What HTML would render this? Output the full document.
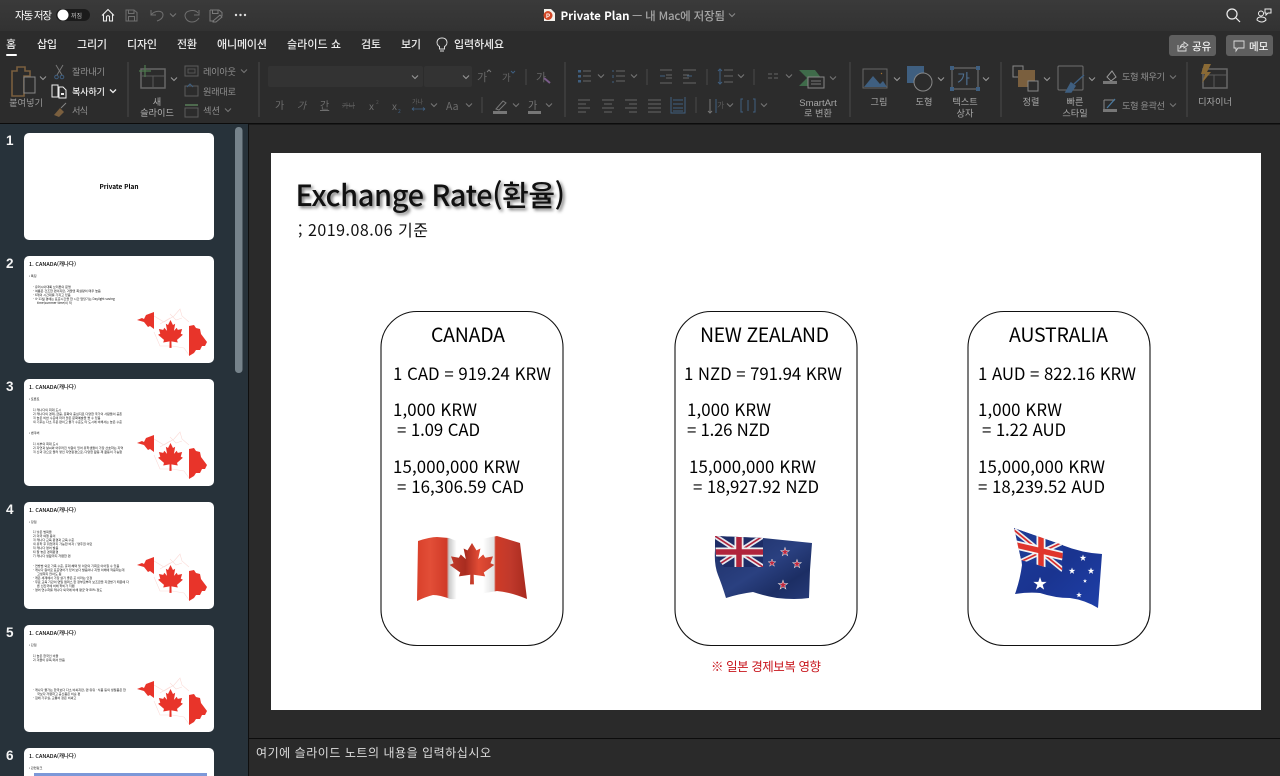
<!DOCTYPE html>
<html lang="ko"><head><meta charset="utf-8"><title>Private Plan</title>
<style>
html,body{margin:0;padding:0;background:#2a2a2a;width:1280px;height:776px;overflow:hidden}
svg{position:absolute;left:0;top:0;display:block;font-family:"Noto Sans CJK KR","Liberation Sans",sans-serif;font-size:9.2px}
.w{fill:#fff}.d{fill:#7c7c7c}
.tab{fill:#ededed;font-size:11px;font-weight:500}
.ch{fill:none;stroke:#9a9a9a;stroke-width:1}
.chd{fill:none;stroke:#777;stroke-width:1}
.blu{fill:none;stroke:#3f5f80;stroke-width:1}
.dg{fill:none;stroke:#666;stroke-width:1}
.s{fill:#000;font-size:16.8px}
.m{fill:#111;font-size:3.1px}
.mt{fill:#000;font-size:5.4px;font-weight:500}
.num{fill:#f4f4f4;font-size:13.500px;font-weight:700;font-family:"Liberation Sans",sans-serif}
</style></head><body>
<svg width="1280" height="776" viewBox="0 0 1280 776" xmlns="http://www.w3.org/2000/svg">
<defs>
<linearGradient id="tb" x1="0" y1="0" x2="0" y2="1"><stop offset="0" stop-color="#3a3a3a"/><stop offset="1" stop-color="#323232"/></linearGradient>
<linearGradient id="ca" x1="0" y1="0" x2="1" y2="0">
<stop offset="0" stop-color="#d9402b"/><stop offset=".12" stop-color="#e24e37"/><stop offset=".27" stop-color="#d03a28"/><stop offset=".29" stop-color="#c8c8c8"/><stop offset=".36" stop-color="#fff"/><stop offset=".6" stop-color="#fff"/><stop offset=".7" stop-color="#e0e0e0"/><stop offset=".715" stop-color="#cf3a27"/><stop offset=".85" stop-color="#c0392b"/><stop offset="1" stop-color="#a82a1f"/></linearGradient>
<linearGradient id="leafg" x1="0" y1="0" x2="1" y2="0"><stop offset="0" stop-color="#c23a2a"/><stop offset=".35" stop-color="#a92c20"/><stop offset=".65" stop-color="#e24c35"/><stop offset="1" stop-color="#c93c2b"/></linearGradient>
<linearGradient id="nzg" x1="0" y1="0" x2="1" y2="1"><stop offset="0" stop-color="#1d2f66"/><stop offset=".5" stop-color="#2a4080"/><stop offset=".75" stop-color="#1c2e64"/><stop offset="1" stop-color="#263a78"/></linearGradient>
<linearGradient id="aug" x1="0" y1="0" x2="1" y2="1"><stop offset="0" stop-color="#1c3a9a"/><stop offset=".5" stop-color="#1a3490"/><stop offset="1" stop-color="#1e3fa8"/></linearGradient>
<clipPath id="nzc"><polygon points="715,536 763,538 763,567 724,567 716,556"/></clipPath>
<clipPath id="auc"><polygon points="1014,528 1063,545 1062,572 1021,560"/></clipPath>
<polygon id="leaf" points="0,-1 .16,-.68 .3,-.76 .22,-.3 .4,-.5 .47,-.36 .75,-.42 .66,-.12 .8,-.05 .42,.28 .47,.45 .06,.38 .07,.8 -.07,.8 -.06,.38 -.47,.45 -.42,.28 -.8,-.05 -.66,-.12 -.75,-.42 -.47,-.36 -.4,-.5 -.22,-.3 -.3,-.76 -.16,-.68"/>
<polygon id="star" points="0,-1 .24,-.31 .95,-.31 .38,.12 .59,.81 0,.4 -.59,.81 -.38,.12 -.95,-.31 -.24,-.31"/>
<path id="chev" d="M-3 -1.500L0 1.500L3 -1.500"/>
<g id="map">
<path d="M130 60L140 66L150 60L156 53L158 60L165 66M130 76L136 90L148 90L160 92L165 99M146 58L152 64L158 62M136 68L146 62" fill="none" stroke="#fbdcd8" stroke-width=".6"/>
<path d="M113 64L118 62L120 63L122 59L130 56V73L126 70L124 71L120 66Z" fill="#e8342a"/>
<path d="M165 70L170 69L172 72L176 73L177 78L183 86L181 90L178 90L176 94L172 94L170 97L165 100Z" fill="#e8342a"/>
<use href="#leaf" transform="translate(146.500 79.500) scale(15.500 15.500)" fill="#e8342a"/>
</g>
</defs>

<!-- backgrounds -->
<rect width="1280" height="776" fill="#2a2a2a"/>
<rect width="1280" height="31" fill="url(#tb)"/>
<rect y="31" width="1280" height="92" fill="#2c2c2c"/>
<rect y="123" width="1280" height="1.500" fill="#0c0c0c"/>
<rect y="124" width="248" height="652" fill="#27323a"/>
<rect x="248" y="124" width="1" height="652" fill="#0f0f0f"/>
<rect x="249" y="738" width="1031" height="1" fill="#0c0c0c"/>

<!-- title bar -->
<text x="15" y="19" class="w" font-size="10.500" textLength="37">자동 저장</text>
<rect x="56" y="9" width="34" height="12" rx="6" fill="#1b1b1b"/>
<circle cx="63" cy="15" r="5.500" fill="#fff"/>
<text x="71" y="18" fill="#c8c8c8" font-size="6">꺼짐</text>
<path d="M102 15.500L108 9.500L114 15.500M103.500 14.500V21H106.500V16.500Q108 14.800 109.500 16.500V21H112.500V14.500" fill="none" stroke="#eee" stroke-width="1.100"/>
<path d="M126 10H134L137 12.500V21H126ZM128.500 10V13.500H134V10M128.500 21V16.500H134.500V21" fill="none" stroke="#6f6f6f" stroke-width="1"/>
<path d="M151 10V15H156M151 15C155 10 163 10 163 15C163 18 160 20 157 21" fill="none" stroke="#6f6f6f" stroke-width="1"/>
<use href="#chev" x="173" y="15" class="chd"/>
<path d="M199 10V15H194M198 13C195 9 186 10 185 15C185 19 188 22 192 22C195 22 197 21 199 18" fill="none" stroke="#6f6f6f" stroke-width="1"/>
<path d="M210 10H219L222 12.500V16M210 10V21H214M212.500 10V13.500H218V10M213 21L220 15L222 17L216 22H213Z" fill="none" stroke="#7a7a7a" stroke-width="1"/>
<circle cx="236" cy="15" r="1.200" fill="#ddd"/><circle cx="240.500" cy="15" r="1.200" fill="#ddd"/><circle cx="245" cy="15" r="1.200" fill="#ddd"/>

<path d="M544 9H551L555 13V21H544Z" fill="#f4f1ec"/>
<circle cx="548" cy="15.500" r="4.500" fill="#d24726"/>
<text x="546" y="18" fill="#fff" font-size="6" font-weight="700" font-family="Liberation Sans">P</text>
<text x="560.500" y="20" class="w" font-size="11.500" font-weight="700" textLength="69">Private Plan</text>
<text x="632" y="20" fill="#a5a5a5" font-size="11.500" font-weight="500" textLength="93">— 내 Mac에 저장됨</text>
<use href="#chev" x="732" y="15" stroke="#8a8a8a" fill="none"/>

<circle cx="1232" cy="14" r="5" fill="none" stroke="#eee" stroke-width="1.200"/><path d="M1236 18L1240 22" stroke="#eee" stroke-width="1.200"/>
<circle cx="1261" cy="13.500" r="2.500" fill="none" stroke="#eee"/><path d="M1257 20Q1257 17 1261 17Q1266 17 1266 20Q1262 24 1257 20Z" fill="none" stroke="#eee"/><path d="M1265 9H1271V13H1268L1266 15V13H1265Z" fill="none" stroke="#eee"/>

<!-- tabs -->
<text x="6" y="48" class="tab">홈</text>
<rect x="6" y="54" width="11" height="2" rx="1" fill="#fff"/>
<text x="37" y="48" class="tab" textLength="20">삽입</text>
<text x="77" y="48" class="tab" textLength="30">그리기</text>
<text x="127" y="48" class="tab" textLength="30">디자인</text>
<text x="177" y="48" class="tab" textLength="20">전환</text>
<text x="217" y="48" class="tab" textLength="50">애니메이션</text>
<text x="287" y="48" class="tab" textLength="54">슬라이드 쇼</text>
<text x="361" y="48" class="tab" textLength="20">검토</text>
<text x="401" y="48" class="tab" textLength="20">보기</text>
<path d="M442 38A4.500 4.500 0 0 0 439.500 46.500V49H444.500V46.500A4.500 4.500 0 0 0 442 38ZM440 51H444" fill="none" stroke="#ddd"/>
<text x="454" y="48" class="tab" textLength="50">입력하세요</text>

<rect x="1169" y="35" width="47" height="21" rx="3" fill="#5f5f5f"/>
<path d="M1178 45V51H1186V48M1180 48Q1181 44 1184 44V42L1188 45L1184 48V46Q1182 46 1180 48Z" fill="none" stroke="#ddd" stroke-width=".9"/>
<text x="1192" y="50" fill="#f0f0f0" font-size="10.500" font-weight="500">공유</text>
<rect x="1226" y="35" width="47" height="21" rx="3" fill="#5f5f5f"/>
<path d="M1234 41H1244V48H1238L1236 51V48H1234Z" fill="none" stroke="#ddd" stroke-width=".9"/>
<text x="1249" y="50" fill="#f0f0f0" font-size="10.500" font-weight="500">메모</text>

<!-- separators -->
<g stroke="#4a4a4a" stroke-width="1">
<path d="M128 62V117M259 62V117M565 62V117M850 62V117M1001 62V117M1187 62V117"/>
<path d="M526 69V85M482 97V113M647 69V85M707 69V85M754 69V85M696 97V113"/></g>

<!-- clipboard -->
<path d="M12 71H17V67H25V71H30V76H24V96H12Z" fill="none" stroke="#7a5f3e" stroke-width="1.600"/>
<rect x="24" y="77" width="11" height="16" fill="#2c2c2c" stroke="#888"/>
<use href="#chev" x="43" y="78" class="ch"/>
<text x="26" y="106" text-anchor="middle" style="fill:#9a9a9a">붙여넣기</text>
<path d="M56 65L62 75M63 65L57 75" stroke="#777" fill="none"/><circle cx="56.500" cy="77" r="1.800" class="blu"/><circle cx="62" cy="77" r="1.800" class="blu"/>
<text x="72" y="75" textLength="33" style="fill:#919191">잘라내기</text>
<path d="M52 85H58V97H52ZM58 85V86M59 87H63L66 90V98H59Z" fill="none" stroke="#eee"/><rect x="61" y="93" width="3" height="2" fill="#eee"/>
<text x="72" y="95" fill="#eee" font-weight="500" textLength="33">복사하기</text>
<use href="#chev" x="113" y="91" stroke="#eee" stroke-width="1.300" fill="none"/>
<path d="M54 115L60 108L64 112L59 117L54 115Z" fill="#7a5f3e"/><path d="M61 108L66 103" stroke="#888"/>
<text x="72" y="114" textLength="16" style="fill:#919191">서식</text>

<!-- slide group -->
<rect x="141" y="69" width="24" height="19" fill="none" stroke="#666" stroke-width="1.500"/>
<path d="M141 76H165M153 76V88" stroke="#5a5a5a" fill="none"/><path d="M145 65V77M139 71H151" stroke="#4e7a4e" stroke-width="1.200" fill="none"/>
<use href="#chev" x="174" y="79" class="ch"/>
<text x="157" y="105" text-anchor="middle" style="fill:#b0b0b0">새</text>
<text x="157" y="116" text-anchor="middle" style="fill:#b0b0b0">슬라이드</text>
<rect x="185" y="66" width="13" height="10" fill="none" stroke="#5c5c5c"/><rect x="188" y="69" width="7" height="4" fill="none" stroke="#555"/>
<text x="203" y="75" textLength="33" style="fill:#8e8e8e">레이아웃</text><use href="#chev" x="244" y="71" class="chd"/>
<rect x="185" y="86" width="13" height="10" fill="none" stroke="#5c5c5c"/><path d="M187 87L190 84L193 87" fill="none" stroke="#3f5f80"/>
<text x="203" y="95" textLength="33" style="fill:#8e8e8e">원래대로</text>
<rect x="185" y="104" width="13" height="2" fill="#4e6a4e"/><rect x="185" y="108" width="13" height="9" fill="none" stroke="#5c5c5c"/>
<text x="203" y="114" textLength="17" style="fill:#8e8e8e">섹션</text><use href="#chev" x="228" y="110" class="chd"/>

<!-- font -->
<rect x="268" y="66" width="155" height="21" rx="2" fill="#333"/>
<rect x="424" y="66" width="48" height="21" rx="2" fill="#333"/>
<use href="#chev" x="415" y="77" class="ch"/><use href="#chev" x="466" y="77" class="ch"/>
<text x="477" y="81" font-size="11" style="fill:#666">가</text><path d="M487 72L489 70L491 72" stroke="#777" fill="none"/>
<text x="502" y="81" font-size="9.500" style="fill:#666">가</text><path d="M511 71L513 73L515 71" stroke="#3f5f80" fill="none"/>
<text x="536" y="81" font-size="11" style="fill:#666">가</text><path d="M544 78L550 83" stroke="#7a5c8a" stroke-width="2"/>
<text x="275" y="109" font-size="10" style="fill:#6e6e6e">가</text>
<text x="297" y="109" font-size="10" font-style="italic" style="fill:#666">가</text>
<text x="320" y="109" font-size="10" text-decoration="underline" style="fill:#6e6e6e">간</text>
<text x="342" y="108" font-size="7" style="fill:#5c5c5c" text-decoration="line-through">가나</text>
<text x="369" y="110" font-size="10" style="fill:#6e6e6e">x</text><text x="376" y="104" font-size="5" style="fill:#555">2</text>
<text x="392" y="110" font-size="10" style="fill:#6e6e6e">x</text><text x="398" y="113" font-size="5" style="fill:#3f5f80">2</text>
<text x="412" y="104" font-size="6" style="fill:#666">가나</text><path d="M412 109H425M412 109L414 107.500M412 109L414 110.500M425 109L423 107.500M425 109L423 110.500" stroke="#3f5f80" fill="none" stroke-width=".8"/>
<text x="446" y="110" font-size="10.500" style="fill:#6e6e6e">Aa</text>
<use href="#chev" x="434" y="105" class="chd"/><use href="#chev" x="469" y="105" class="chd"/>
<path d="M496 109L503 101L506 103L499 110Z" fill="none" stroke="#777"/><rect x="493" y="111" width="14" height="3" fill="#777"/><use href="#chev" x="516" y="105" class="chd"/>
<text x="528" y="109" font-size="10" style="fill:#777">가</text><rect x="528" y="111" width="13" height="3" fill="#777"/><use href="#chev" x="549" y="105" class="chd"/>

<!-- paragraph -->
<g class="dg">
<path d="M583 71H591M583 76H591M583 81H591M616 71H625M616 76H625M616 81H625M660 70H672M666 75H672M666 78H672M660 83H672M683 70H696M683 83H696M683 75H689M683 78H689M724 70H733M724 76H733M724 82H733M768 74H772M768 78H772M774 74H778M774 78H778"/>
<path d="M578 100H590M578 104H586M578 108H590M578 112H586M602 100H614M604 104H612M602 108H614M604 112H612M625 100H637M629 104H637M625 108H637M629 112H637M648 100H661M648 104H661M648 108H661M648 112H661"/></g>
<rect x="578" y="70" width="3" height="2.500" fill="#3f5f80"/><rect x="578" y="75" width="3" height="2.500" fill="#3f5f80"/><rect x="578" y="80" width="3" height="2.500" fill="#3f5f80"/>
<use href="#chev" x="601" y="76" class="chd"/><use href="#chev" x="634" y="76" class="chd"/>
<path d="M613 70V72M613 75V78M613 81V83" stroke="#3f5f80"/>
<path d="M660 76H665M687 76H692M720 69V84M718 71L720 69L722 71M718 82L720 84L722 82" class="blu"/>
<use href="#chev" x="741" y="76" class="chd"/>
<use href="#chev" x="789" y="76" class="chd"/><use href="#chev" x="833" y="78" class="chd"/>
<path d="M671 97V113H685V97M673 100H683M673 104H683M673 108H683M673 111H683" class="blu"/>
<path d="M710 99V113M708 111L710 113L712 111" stroke="#777" fill="none"/><path d="M716 99V113" stroke="#3f5f80"/>
<text x="717" y="108" font-size="8" style="fill:#5a5a5a">가</text>
<use href="#chev" x="730" y="105" class="chd"/>
<path d="M743 99H741V112H743M753 99H755V112H753M748 100V111" class="blu"/><use href="#chev" x="764" y="105" class="chd"/>
<path d="M799 70H815L822 79L815 86H799L807 78Z" fill="#3f6b4a"/><rect x="808" y="77" width="16" height="11" fill="#2c2c2c" stroke="#888"/><path d="M811 81H821M811 84H821" stroke="#777"/>
<text x="818" y="106" text-anchor="middle" style="fill:#a6a6a6" font-size="9.500" font-family="Liberation Sans">SmartArt</text>
<text x="818" y="116.500" text-anchor="middle" style="fill:#a6a6a6">로 변환</text>

<!-- insert -->
<rect x="863" y="69" width="24" height="19" fill="#2c2c2c" stroke="#666"/><path d="M864 87L873 76L880 84L883 81L887 87Z" fill="#3f5f80"/><path d="M881 73L882 74" stroke="#b07a30"/>
<use href="#chev" x="897" y="79" class="ch"/>
<text x="879" y="105" text-anchor="middle" style="fill:#a8a8a8">그림</text>
<rect x="907" y="66" width="17" height="17" fill="#3f5f80"/><circle cx="923" cy="82" r="9" fill="#2c2c2c" stroke="#888"/>
<use href="#chev" x="941" y="79" class="ch"/>
<text x="924" y="105" text-anchor="middle" style="fill:#a8a8a8">도형</text>
<rect x="952" y="68" width="26" height="21" fill="none" stroke="#777"/>
<g fill="#3f5f80"><rect x="950" y="66" width="4" height="4"/><rect x="976" y="66" width="4" height="4"/><rect x="950" y="87" width="4" height="4"/><rect x="976" y="87" width="4" height="4"/></g>
<text x="957" y="84" style="fill:#4f6f90" font-size="14">가</text>
<use href="#chev" x="986" y="79" class="ch"/>
<text x="965" y="105" text-anchor="middle" style="fill:#a8a8a8">텍스트</text>
<text x="965" y="116.500" text-anchor="middle" style="fill:#a8a8a8">상자</text>
<!-- drawing -->
<rect x="1013" y="66" width="10" height="11" fill="#2c2c2c" stroke="#888"/><rect x="1018" y="70" width="17" height="17" fill="#7a5f3e"/><rect x="1028" y="81" width="10" height="10" fill="#2c2c2c" stroke="#888"/>
<use href="#chev" x="1047" y="79" class="ch"/>
<text x="1031" y="105" text-anchor="middle" style="fill:#a8a8a8">정렬</text>
<rect x="1058" y="66" width="25" height="24" rx="1" fill="none" stroke="#707070"/><path d="M1066 92L1071 83L1075 86L1071 92ZM1074 84L1084 75" stroke="#3f5f80" stroke-width="1.500" fill="#3f5f80"/>
<use href="#chev" x="1092" y="79" class="ch"/>
<text x="1075" y="105" text-anchor="middle" style="fill:#a8a8a8">빠른</text>
<text x="1075" y="116.500" text-anchor="middle" style="fill:#a8a8a8">스타일</text>
<path d="M1107 77L1112 71L1116 77L1111 81Z" fill="none" stroke="#999"/><rect x="1103" y="81" width="14" height="3" fill="#777"/>
<text x="1122" y="80" textLength="43" style="fill:#909090">도형 채우기</text><use href="#chev" x="1173" y="77" class="chd"/>
<path d="M1104 100H1115M1104 100V111" stroke="#888" fill="none"/><path d="M1107 108L1115 99" stroke="#4a7aa0" stroke-width="1.300"/><rect x="1103" y="109" width="14" height="3" fill="#777"/>
<text x="1122" y="109" textLength="43" style="fill:#909090">도형 윤곽선</text><use href="#chev" x="1173" y="105" class="chd"/>
<!-- designer -->
<rect x="1203" y="69" width="24" height="19" fill="none" stroke="#666" stroke-width="1.500"/><path d="M1203 75H1227M1214 75V88" stroke="#5a5a5a"/>
<path d="M1204 64H1211L1207 72H1211L1202 83L1205 74H1201Z" fill="#8a6a35"/>
<text x="1215" y="105" text-anchor="middle" style="fill:#a8a8a8">디자이너</text>

<!-- scrollbar -->
<rect x="235" y="127" width="7.500" height="246" rx="3.500" fill="#76838b"/>

<!-- thumbnails -->
<text x="6" y="145" class="num">1</text><text x="6" y="268" class="num">2</text><text x="6" y="391" class="num">3</text><text x="6" y="514" class="num">4</text><text x="6" y="637" class="num">5</text><text x="6" y="760" class="num">6</text>

<g transform="translate(24 133)"><rect width="190" height="107" rx="5" fill="#fff"/><text x="95" y="56" text-anchor="middle" fill="#000" font-size="6.500" font-weight="700">Private Plan</text></g>

<g transform="translate(24 256)"><rect width="190" height="107" rx="5" fill="#fff"/><use href="#map"/><text x="5" y="10" class="mt" textLength="47">1. CANADA(캐나다)</text>
<text x="5" y="21" class="m">•  특징</text>
<text x="9" y="32" class="m">-  유러시아대륙 브리튼의 문명</text><text x="9" y="36" class="m">-  여름은 건조한 편이지만, 겨울엔 폭설량이 매우 높음</text><text x="9" y="40" class="m">-  6개의 시간대를 가지고 있음</text><text x="9" y="44" class="m">-  4~11월 경에는 표준시간을 한 시간 앞당기는 Daylight saving</text><text x="13" y="48" class="m">time(summer time)이 적</text></g>

<g transform="translate(24 379)"><rect width="190" height="107" rx="5" fill="#fff"/><use href="#map"/><text x="5" y="10" class="mt" textLength="47">1. CANADA(캐나다)</text>
<text x="5" y="21" class="m">•  토론토</text>
<text x="9" y="32" class="m">1)  캐나다의 최대 도시</text><text x="9" y="36" class="m">2)  캐나다의 경제, 금융, 문화의 중심지로 다양한 국가의 사람들이 공존</text><text x="9" y="40" class="m">3)  높은 비싼 수준에 따라 많은 문화예술을 볼 수 있음</text><text x="9" y="44" class="m">4)  기후는 다소 추운 편이고 물가 수준도 타 도시에 비해서는 높은 수준</text>
<text x="5" y="55" class="m">•  밴쿠버</text>
<text x="9" y="66" class="m">1)  서부의 최대 도시</text><text x="9" y="70" class="m">2)  자연과 날씨와 어우러진 낙원이 있어 유학생들이 가장 선호하는 지역</text><text x="9" y="74" class="m">3)  산과 강으로 둘러 쌓인 자연환경으로, 다양한 활동 제 활동이 가능함</text></g>

<g transform="translate(24 502)"><rect width="190" height="107" rx="5" fill="#fff"/><use href="#map" transform="translate(0 -1)"/><text x="5" y="10" class="mt" textLength="47">1. CANADA(캐나다)</text>
<text x="5" y="21" class="m">•  장점</text>
<text x="9" y="31" class="m">1)  낮은 범죄율</text><text x="9" y="35" class="m">2)  미국 여행 용이</text><text x="9" y="39" class="m">3)  캐나다 교육 환경과 교육 수준</text><text x="9" y="43" class="m">4)  유학 후 취업까지 가능한 비자 / 영주권 이민</text><text x="9" y="47" class="m">5)  캐나다 영어 발음</text><text x="9" y="51" class="m">6)  잘 놓은 경제환경</text><text x="9" y="55" class="m">7)  캐나다 생활까지 저렴한 편</text>
<text x="9" y="65" class="m">-  연방법 외로 가족 수준, 휴대 혜택 및 이민의 기회로 이어질 수 있음</text><text x="9" y="69" class="m">-  캐나다 원어로 표준영어가 있어 보다 발음이나 지명 이해에 적응하는데</text><text x="13" y="73" class="m">고생하지 않아도 됨</text><text x="9" y="77" class="m">-  캐온 세계에서 가장 살기 좋은 곳 이라는 인정</text><text x="9" y="81" class="m">-  무료 교육 기관이 면밀 캠퍼스 한 정부로부터 보조금을 지급받기 때문에 다</text><text x="13" y="85" class="m">른 선진국에 비해 학비가 저렴</text><text x="9" y="89" class="m">-  영어 연수하를 캐나다 외국에 비해 평균 약 80% 정도</text></g>

<g transform="translate(24 625)"><rect width="190" height="107" rx="5" fill="#fff"/><use href="#map"/><text x="5" y="10" class="mt" textLength="47">1. CANADA(캐나다)</text>
<text x="5" y="21" class="m">•  단점</text>
<text x="9" y="32" class="m">1)  높은 한국인 비율</text><text x="9" y="36" class="m">2)  겨울이 유독 매서 많음</text>
<text x="9" y="66" class="m">-  캐나다 물가는 한국보다 다소 비싸지만, 렌·유유 · 식품 등의 생필품은 한</text><text x="13" y="70" class="m">국보다 저렴하고 공산품은 비슷 편</text><text x="9" y="74" class="m">-  집에 가꾸실, 교통비 정은 비싸고</text></g>

<g transform="translate(24 748)"><rect width="190" height="40" rx="5" fill="#fff"/><text x="5" y="10" class="mt" textLength="47">1. CANADA(캐나다)</text>
<text x="5" y="21" class="m">•  관련링크</text><rect x="10" y="25" width="173" height="3" fill="#7c98d8"/></g>

<!-- main slide -->
<rect x="271" y="153" width="990" height="557" fill="#fff"/>
<text x="295.500" y="206" fill="#111" font-size="29" font-weight="500" textLength="269.500" style="filter:drop-shadow(2px 2px 1.500px rgba(0,0,0,.55))">Exchange Rate(환율)</text>
<text x="298" y="236" fill="#111" font-size="16" textLength="130">; 2019.08.06 기준</text>

<g fill="#fff" stroke="#111" stroke-width="1.100">
<rect x="381" y="311.500" width="182" height="334" rx="36"/>
<rect x="675" y="311.500" width="182" height="334" rx="36"/>
<rect x="968" y="311.500" width="182" height="334" rx="36"/></g>

<text x="431" y="342" class="s" style="font-size:19.500px" textLength="74">CANADA</text>
<text x="393" y="380" class="s" textLength="158">1 CAD = 919.24 KRW</text>
<text x="393" y="416" class="s" textLength="84">1,000 KRW</text>
<text x="397" y="436" class="s" textLength="83">= 1.09 CAD</text>
<text x="393" y="473" class="s" textLength="127">15,000,000 KRW</text>
<text x="397" y="493" class="s" textLength="127">= 16,306.59 CAD</text>

<text x="700" y="342" class="s" style="font-size:19.500px" textLength="129">NEW ZEALAND</text>
<text x="684" y="380" class="s" textLength="158">1 NZD = 791.94 KRW</text>
<text x="687" y="416" class="s" textLength="84">1,000 KRW</text>
<text x="687" y="436" class="s" textLength="83">= 1.26 NZD</text>
<text x="689" y="473" class="s" textLength="127">15,000,000 KRW</text>
<text x="693" y="493" class="s" textLength="126">= 18,927.92 NZD</text>

<text x="1009" y="342" class="s" style="font-size:19.500px" textLength="99">AUSTRALIA</text>
<text x="978" y="380" class="s" textLength="158">1 AUD = 822.16 KRW</text>
<text x="978" y="416" class="s" textLength="84">1,000 KRW</text>
<text x="982" y="436" class="s" textLength="84">= 1.22 AUD</text>
<text x="978" y="473" class="s" textLength="127">15,000,000 KRW</text>
<text x="978" y="493" class="s" textLength="127">= 18,239.52 AUD</text>

<text x="711" y="671" fill="#c8161d" font-size="12.500" textLength="110">※ 일본 경제보복 영향</text>

<!-- canada flag -->
<path d="M418 541Q430 537 437 537L449 538Q460 543 470 542Q485 538 497 536L520 543L527 599Q510 592 497 591Q485 593 473 595Q460 600 450 599Q440 595 433 595Q425 597 417 601Z" fill="url(#ca)"/>
<use href="#leaf" transform="translate(472 566) scale(28 23)" fill="url(#leafg)"/>

<!-- nz flag -->
<path d="M715 536L763 538L812 543L810 570L809 598Q795 600 777 598Q765 596 753 592Q738 594 726 598Q722 585 718 575Q714 565 715 550Z" fill="url(#nzg)"/>
<g clip-path="url(#nzc)"><rect x="715" y="536" width="48" height="32" fill="#1d2c66"/>
<path d="M715 536L763 567M763 536L715 567" stroke="#e8e8ee" stroke-width="5"/>
<path d="M715 536L763 567M763 536L715 567" stroke="#b0243c" stroke-width="1.600"/>
<path d="M739 536V567M715 552H763" stroke="#eee" stroke-width="9"/>
<path d="M739 536V567M715 552H763" stroke="#b0243c" stroke-width="5.500"/></g>
<g fill="#c0283f" stroke="#e8e8e8" stroke-width=".12">
<use href="#star" transform="translate(785 552) scale(4.500)"/><use href="#star" transform="translate(772 563) scale(4)"/><use href="#star" transform="translate(797 564) scale(4.500)"/><use href="#star" transform="translate(783 585) scale(4.800)"/></g>

<!-- au flag -->
<path d="M1014 528L1062 545Q1082 553 1102 554L1098 608Q1085 600 1070 598Q1055 598 1040 593Q1028 592 1015 594Q1020 580 1022 565Q1020 545 1014 528Z" fill="url(#aug)"/>
<g clip-path="url(#auc)"><polygon points="1014,528 1063,545 1062,572 1021,560" fill="#1d3a94"/>
<path d="M1014 530L1063 570M1063 542L1020 562" stroke="#eee" stroke-width="5"/>
<path d="M1014 530L1063 570M1063 542L1020 562" stroke="#d82c2c" stroke-width="1.700"/>
<path d="M1041 530V575M1016 545L1063 556" stroke="#f5f5f5" stroke-width="9"/>
<path d="M1041 530V575M1016 545L1063 556" stroke="#e0352b" stroke-width="5.500"/></g>
<g fill="#fff"><use href="#star" transform="translate(1040 584) scale(7)"/><use href="#star" transform="translate(1083 558) scale(3.500)"/><use href="#star" transform="translate(1072 571) scale(3.500)"/><use href="#star" transform="translate(1091 571) scale(3.500)"/><use href="#star" transform="translate(1085 581) scale(2.200)"/><use href="#star" transform="translate(1079 595) scale(3)"/></g>

<!-- notes -->
<text x="256" y="757" fill="#dcdcdc" font-size="12" textLength="235">여기에 슬라이드 노트의 내용을 입력하십시오</text>
</svg>
</body></html>
